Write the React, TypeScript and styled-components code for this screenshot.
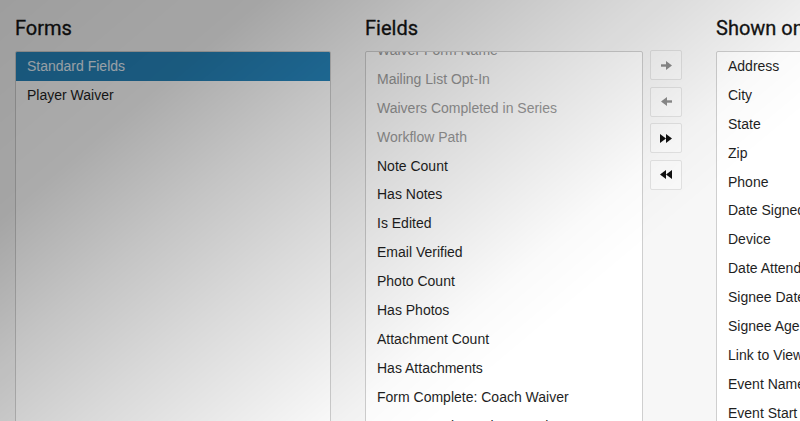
import React, { useLayoutEffect, useRef } from "react";
import styled, { createGlobalStyle } from "styled-components";

const Global = createGlobalStyle`
  html, body { margin: 0; padding: 0; overflow: hidden; background: #f7f7f7; }
  body { width: 800px; height: 421px; font-family: "Liberation Sans", Arial, sans-serif; }
  * { box-sizing: border-box; }
`;

const Page = styled.div`
  display: flex;
  align-items: flex-start;
  gap: 34px;
  padding: 16px 0 0 15px;
  height: 421px;
  width: 1100px;
`;

const Column = styled.section<{ $width?: number }>`
  display: flex;
  flex-direction: column;
  flex: 0 0 ${(p) => (p.$width ? `${p.$width}px` : "auto")};
`;

const Heading = styled.h2`
  margin: 0 0 11px;
  font-family: Roboto, "Liberation Sans", sans-serif;
  font-weight: 400;
  font-size: 20px;
  line-height: 24px;
  color: #141414;
  white-space: nowrap;
  -webkit-text-stroke: 0.3px #141414;
`;

const Row = styled.div`
  display: flex;
  align-items: flex-start;
  gap: 7px;
`;

const List = styled.ul<{ $width: number }>`
  list-style: none;
  margin: 0;
  padding: 0;
  width: ${(p) => p.$width}px;
  height: 400px;
  overflow: hidden;
  background: #ffffff;
  border: 1px solid #cfcfcf;
  border-radius: 2px;
`;

const Item = styled.li<{ $selected?: boolean; $disabled?: boolean }>`
  height: 28.9px;
  line-height: 28.9px;
  padding: 0 11px;
  font-size: 14px;
  white-space: nowrap;
  color: ${(p) => (p.$selected ? "#e6f2fb" : p.$disabled ? "#9a9a9a" : "#1f1f1f")};
  background: ${(p) => (p.$selected ? "#2786bd" : "transparent")};
`;

const Buttons = styled.div`
  display: flex;
  flex-direction: column;
  gap: 6.5px;
  margin-top: -1px;
`;

const MoveButton = styled.button<{ $disabled?: boolean }>`
  display: flex;
  align-items: center;
  justify-content: center;
  width: 32px;
  height: 30px;
  padding: 0;
  background: #fafafa;
  border: 1px solid #e2e2e2;
  border-radius: 2px;
  color: ${(p) => (p.$disabled ? "#8c8c8c" : "#111111")};
`;

const Overlay = styled.div`
  position: fixed;
  inset: 0;
  pointer-events: none;
  background:
    linear-gradient(
      140deg,
      rgba(0, 0, 0, 0.36) 0%,
      rgba(0, 0, 0, 0.33) 20%,
      rgba(0, 0, 0, 0.23) 33%,
      rgba(0, 0, 0, 0.15) 45%,
      rgba(0, 0, 0, 0.08) 56%,
      rgba(0, 0, 0, 0.02) 65%,
      rgba(0, 0, 0, 0) 72%,
      rgba(0, 0, 0, 0) 100%
    );
`;

const ArrowRight = () => (
  <svg width="11" height="9" viewBox="0 0 11 9" fill="currentColor">
    <rect x="0" y="3.3" width="6" height="2.4" />
    <polygon points="5,0 11,4.5 5,9" />
  </svg>
);

const ArrowLeft = () => (
  <svg width="11" height="9" viewBox="0 0 11 9" fill="currentColor">
    <rect x="5" y="3.3" width="6" height="2.4" />
    <polygon points="6,0 0,4.5 6,9" />
  </svg>
);

const DoubleRight = () => (
  <svg width="12" height="9" viewBox="0 0 12 9" fill="currentColor">
    <polygon points="0,0 6,4.5 0,9" />
    <polygon points="6,0 12,4.5 6,9" />
  </svg>
);

const DoubleLeft = () => (
  <svg width="12" height="9" viewBox="0 0 12 9" fill="currentColor">
    <polygon points="6,0 0,4.5 6,9" />
    <polygon points="12,0 6,4.5 12,9" />
  </svg>
);

const forms = ["Standard Fields", "Player Waiver"];

const fields: { label: string; disabled?: boolean }[] = [
  { label: "Waiver Form Name", disabled: true },
  { label: "Mailing List Opt-In", disabled: true },
  { label: "Waivers Completed in Series", disabled: true },
  { label: "Workflow Path", disabled: true },
  { label: "Note Count" },
  { label: "Has Notes" },
  { label: "Is Edited" },
  { label: "Email Verified" },
  { label: "Photo Count" },
  { label: "Has Photos" },
  { label: "Attachment Count" },
  { label: "Has Attachments" },
  { label: "Form Complete: Coach Waiver" },
  { label: "Form Complete: Player Waiver" },
  { label: "Form Complete: Volunteer Waiver" },
];

const shown = [
  "Address",
  "City",
  "State",
  "Zip",
  "Phone",
  "Date Signed",
  "Device",
  "Date Attended",
  "Signee Date of Birth",
  "Signee Age",
  "Link to View Waiver",
  "Event Name",
  "Event Start",
  "Event End",
];

export default function App() {
  const fieldsRef = useRef<HTMLUListElement>(null);
  useLayoutEffect(() => {
    if (fieldsRef.current) fieldsRef.current.scrollTop = 16;
  }, []);

  return (
    <>
      <Global />
      <Page>
        <Column $width={316}>
          <Heading>Forms</Heading>
          <List $width={316}>
            {forms.map((f, i) => (
              <Item key={f} $selected={i === 0}>
                {f}
              </Item>
            ))}
          </List>
        </Column>
        <Column>
          <Heading>Fields</Heading>
          <Row>
            <List $width={278} ref={fieldsRef}>
              {fields.map((f) => (
                <Item key={f.label} $disabled={f.disabled}>
                  {f.label}
                </Item>
              ))}
            </List>
            <Buttons>
              <MoveButton $disabled aria-label="Add">
                <ArrowRight />
              </MoveButton>
              <MoveButton $disabled aria-label="Remove">
                <ArrowLeft />
              </MoveButton>
              <MoveButton aria-label="Add all">
                <DoubleRight />
              </MoveButton>
              <MoveButton aria-label="Remove all">
                <DoubleLeft />
              </MoveButton>
            </Buttons>
          </Row>
        </Column>
        <Column $width={300}>
          <Heading>Shown on Report</Heading>
          <List $width={300}>
            {shown.map((s) => (
              <Item key={s}>{s}</Item>
            ))}
          </List>
        </Column>
      </Page>
      <Overlay />
    </>
  );
}
